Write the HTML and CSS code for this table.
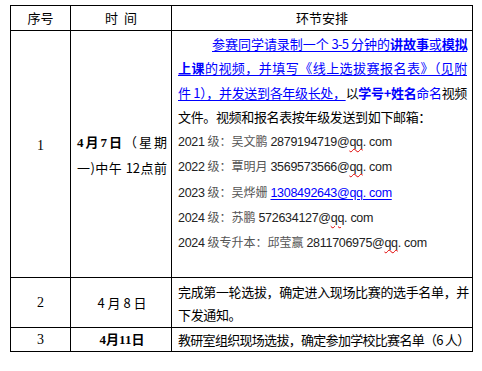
FILE: index.html
```html
<!DOCTYPE html>
<html lang="zh">
<head>
<meta charset="utf-8">
<link rel="stylesheet" href="styles.css">
</head>
<body>
<table class="plan">
  <colgroup>
    <col class="c-no">
    <col class="c-time">
    <col class="c-plan">
  </colgroup>
  <tr class="head">
    <td>序号</td>
    <td>时&nbsp;&nbsp;间</td>
    <td>环节安排</td>
  </tr>
  <tr class="r1">
    <td class="no"><div class="one">1</div></td>
    <td class="time"><div class="tl"><b class="bd">4月7日</b>（星期</div><div class="tl">一)中午 12点前</div></td>
    <td class="plan-cell">
      <div class="ln ind blue ul j">参赛同学请录制一个 3-5 分钟的<b>讲故事</b>或<b>模拟</b></div>
      <div class="ln blue ul j"><b>上课</b>的视频，并填写《线上选拔赛报名表》（见附</div>
      <div class="ln j"><span class="blue ul">件 1），并发送到各年级长处，</span>以<b class="blue">学号+姓名</b><span class="blue">命名</span>视频</div>
      <div class="ln">文件。视频和报名表按年级发送到如下邮箱：</div>
      <div class="ln mail"><span class="num">2021</span> <span class="kai">级：吴文鹏</span> <span class="num">2879194719@<span class="sp">qq</span>. com</span></div>
      <div class="ln mail"><span class="num">2022</span> <span class="kai">级：覃明月</span> <span class="num">3569573566@<span class="sp">qq</span>. com</span></div>
      <div class="ln mail"><span class="num">2023</span> <span class="kai">级：吴烨姗</span> <span class="num link">1308492643@qq. com</span></div>
      <div class="ln mail"><span class="num">2024</span> <span class="kai">级：苏鹏</span> <span class="num">572634127@<span class="sp">qq</span>. com</span></div>
      <div class="ln mail"><span class="num">2024</span> <span class="kai">级专升本：邱莹赢</span> <span class="num">2811706975@<span class="sp">qq</span>. com</span></div>
    </td>
  </tr>
  <tr class="r2">
    <td class="no">2</td>
    <td class="time">4 月 8 日</td>
    <td class="plan-cell two"><div class="ln2 j">完成第一轮选拔，确定进入现场比赛的选手名单，并</div><div class="ln2">下发通知。</div></td>
  </tr>
  <tr class="r3">
    <td class="no">3</td>
    <td class="time"><b class="bd">4月11日</b></td>
    <td class="plan-cell two"><div class="ln3 j">教研室组织现场选拔，确定参加学校比赛名单（6 人）</div></td>
  </tr>
</table>
</body>
</html>
```
FILE: styles.css
```css
html, body {
  margin: 0;
  padding: 0;
  background: #fff;
}
body {
  padding: 5px 0 0 10px;
  font-family: "Noto Sans CJK SC", "Liberation Sans", sans-serif;
  font-size: 13px;
  color: #000;
}
.plan {
  border-collapse: collapse;
  table-layout: fixed;
  width: 462px;
}
.c-no { width: 60px; }
.c-time { width: 101px; }
.c-plan { width: 301px; }
.plan td {
  border: 1px solid #000;
  padding: 0;
  vertical-align: middle;
  text-align: center;
  overflow: hidden;
}
.head td {
  height: 24px;
  line-height: 24px;
}
.r1 td { height: 245px; }
.r2 td { height: 49px; }
.r3 td { height: 22px; line-height: 22px; }
.no { font-family: "Liberation Serif", serif; font-size: 14px; }
.one { margin-bottom: 16px; }
.time {
  line-height: 25px;
  padding: 0 4px 0 6px !important;
  text-align: center;
}
.tl { text-align: justify; text-align-last: justify; white-space: nowrap; }
.bd { font-family: "Liberation Serif", "Noto Sans CJK SC", serif; font-weight: bold; }
.plan-cell {
  text-align: left !important;
  vertical-align: top !important;
  padding: 1px 5px 0 6px !important;
  letter-spacing: -0.35px;
}
.plan-cell.two { vertical-align: middle !important; padding-top: 0 !important; }
.ln {
  line-height: 24.3px;
  white-space: nowrap;
}
.ln2 { line-height: 23px; white-space: nowrap; }
.ln3 { white-space: nowrap; letter-spacing: -0.7px; }
.j { text-align: justify; text-align-last: justify; }
.ind { padding-left: 34px; letter-spacing: -0.8px; }
.blue { color: #0000ff; }
.ul { text-decoration: underline; text-decoration-color: #0000ff; text-underline-offset: 2px; }
b { font-weight: bold; }
.mail { color: #222; letter-spacing: 0; }
.num { font-family: "Liberation Sans", sans-serif; font-size: 12.5px; letter-spacing: -0.3px; }
.kai { color: #555; font-size: 12px; }
.sp {
  text-decoration: underline wavy #e00000;
  text-underline-offset: 2px;
  text-decoration-thickness: 1px;
}
.link { color: #0000ff; text-decoration: underline; text-underline-offset: 2px; }
```
